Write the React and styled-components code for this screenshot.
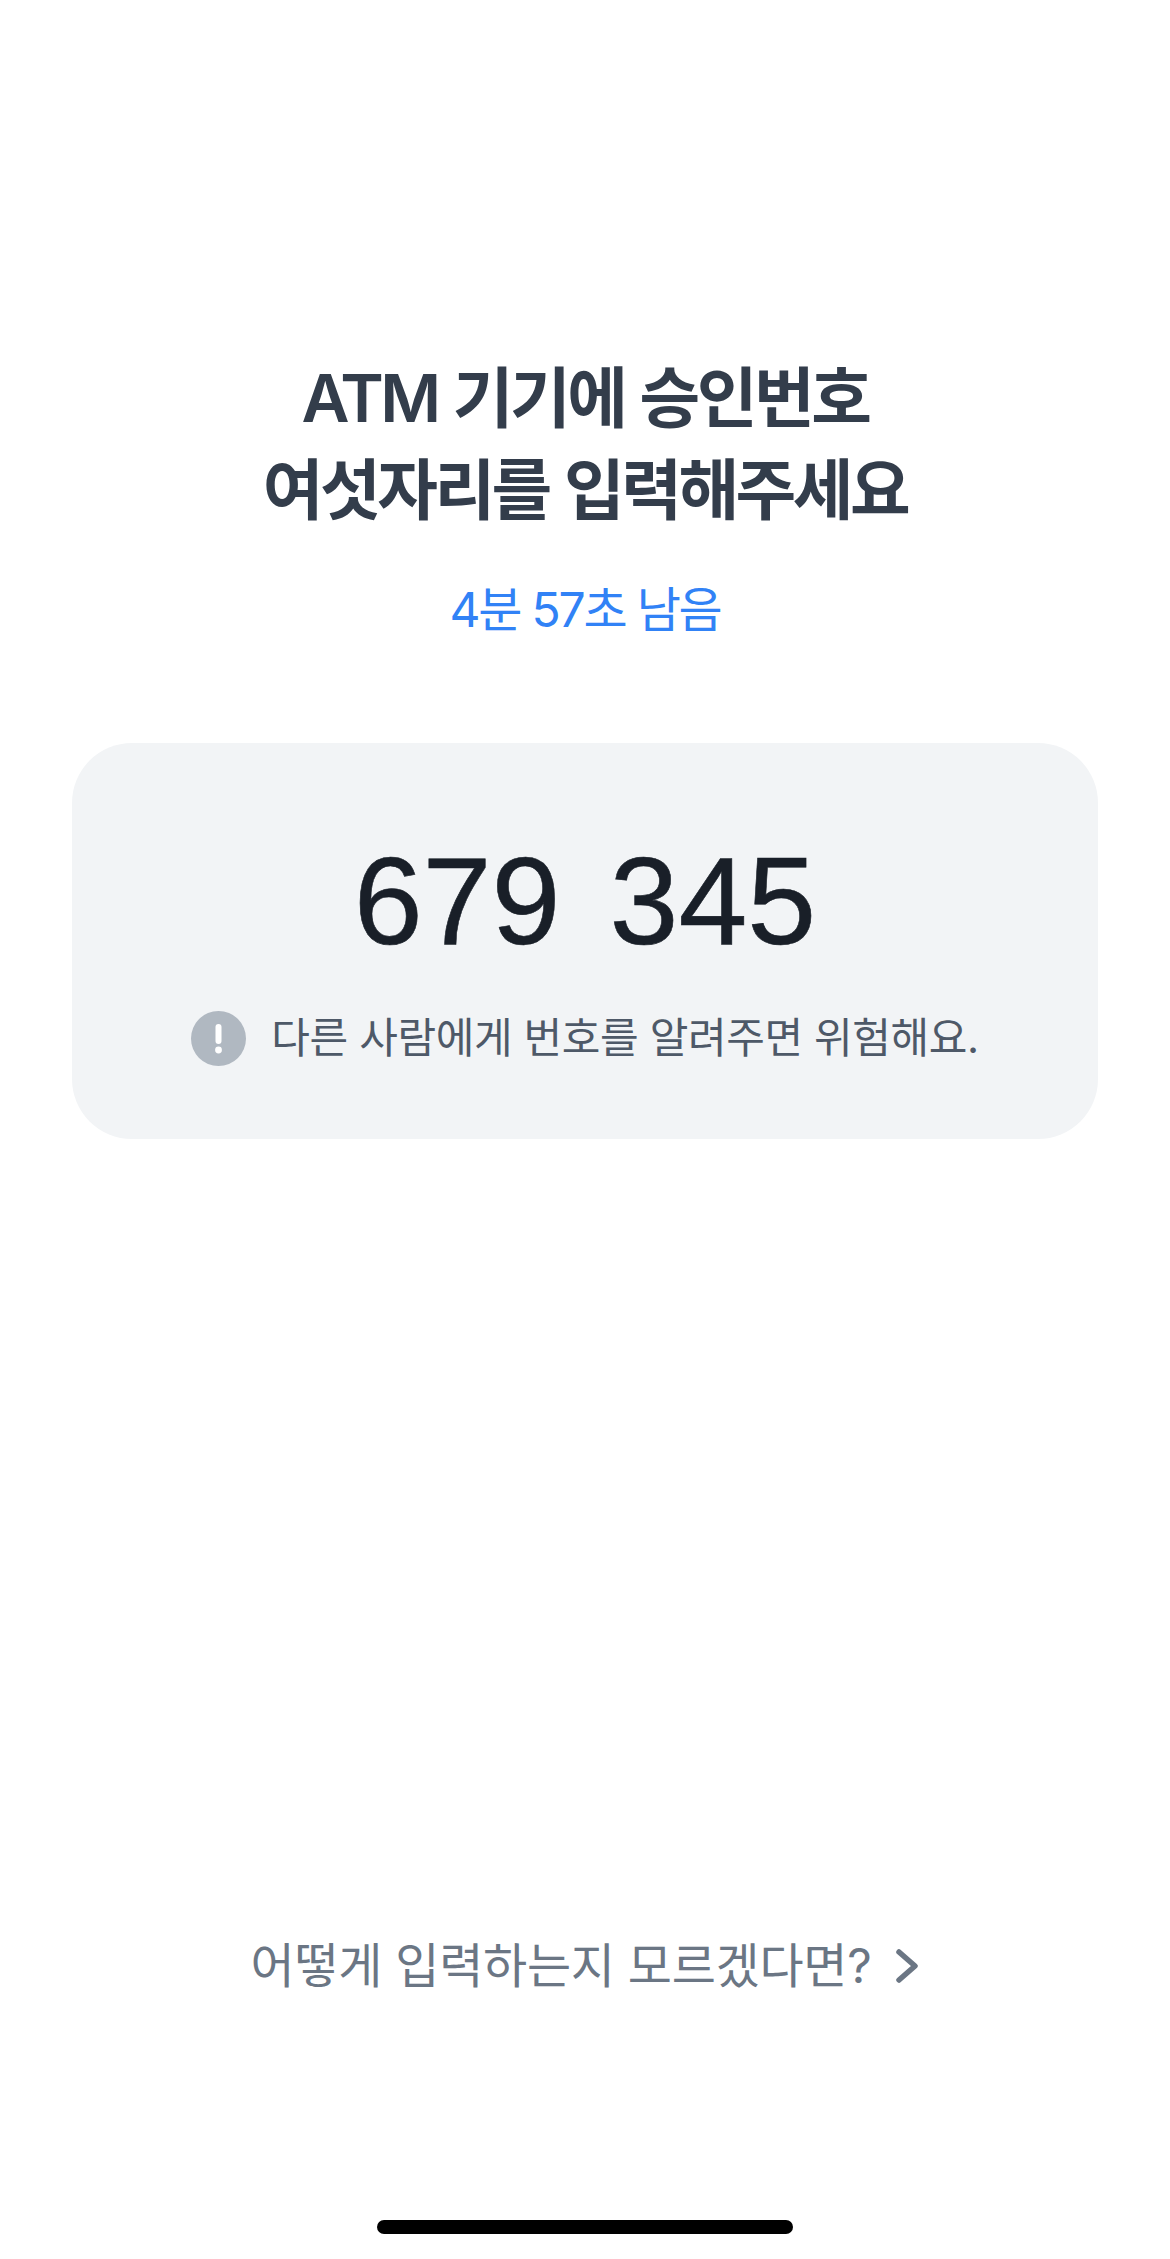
import React from 'react';
import styled, { createGlobalStyle } from 'styled-components';

const GlobalStyle = createGlobalStyle`
  html, body {
    margin: 0;
    padding: 0;
    background: #fff;
  }
  body {
    font-family: "Inter", "Noto Sans CJK KR", sans-serif;
  }
`;

export default function App() {
  return (
    <>
      <GlobalStyle />
      <Page>
        <Header>
          <Title>ATM 기기에 승인번호<br />여섯자리를 입력해주세요</Title>
          <Timer>4분 57초 남음</Timer>
        </Header>
        <CodeCard>
          <Code>679&nbsp;&nbsp;345</Code>
          <Warning>
            <WarningIcon viewBox="0 0 55 55">
              <circle cx="27.5" cy="27.5" r="27.5" fill="#b0b8c1" />
              <rect x="24.5" y="13" width="6" height="20" rx="3" fill="#fff" />
              <circle cx="27.5" cy="39" r="3.4" fill="#fff" />
            </WarningIcon>
            <WarningText>다른 사람에게 번호를 알려주면 위험해요.</WarningText>
          </Warning>
        </CodeCard>
        <Spacer />
        <HelpLink>
          어떻게 입력하는지 모르겠다면?
          <Chevron viewBox="0 0 24 36">
            <path d="M4 4 L20 18 L4 32" fill="none" stroke="#6b7684" strokeWidth="5.5" strokeLinecap="round" strokeLinejoin="round" />
          </Chevron>
        </HelpLink>
        <HomeIndicator />
      </Page>
    </>
  );
}

const Page = styled.div`
  width: 1170px;
  height: 2259px;
  display: flex;
  flex-direction: column;
  align-items: center;
  padding: 352px 72px 25px;
  box-sizing: border-box;
  overflow: hidden;
`;

const Header = styled.div`
  display: flex;
  flex-direction: column;
  align-items: center;
`;

const Title = styled.h1`
  margin: 0;
  font-size: 66px;
  line-height: 92px;
  font-weight: 600;
  letter-spacing: -3.5px;
  word-spacing: 2px;
  text-align: center;
  color: #333d4b;
`;

const Timer = styled.div`
  margin-top: 42px;
  font-size: 48px;
  line-height: 64px;
  font-weight: 400;
  letter-spacing: -2.2px;
  color: #3182f6;
`;

const CodeCard = styled.div`
  margin-top: 101px;
  width: 100%;
  height: 396px;
  box-sizing: border-box;
  padding-top: 98px;
  border-radius: 60px;
  background: #f2f4f6;
  display: flex;
  flex-direction: column;
  align-items: center;
`;

const Code = styled.div`
  font-family: "Liberation Sans", Arial, sans-serif;
  font-size: 124px;
  line-height: 120px;
  word-spacing: -10px;
  -webkit-text-stroke: 0.6px #191f28;
  color: #191f28;
`;

const Warning = styled.div`
  margin-top: 49px;
  display: flex;
  align-items: center;
  gap: 25px;
`;

const WarningIcon = styled.svg`
  width: 55px;
  height: 55px;
  flex: none;
`;

const WarningText = styled.div`
  font-size: 42px;
  line-height: 56px;
  letter-spacing: -0.4px;
  color: #4e5968;
`;

const Spacer = styled.div`
  flex: 1;
`;

const HelpLink = styled.div`
  display: flex;
  align-items: center;
  gap: 24px;
  font-size: 48px;
  line-height: 64px;
  letter-spacing: -0.3px;
  color: #6b7684;
`;

const Chevron = styled.svg`
  width: 24px;
  height: 36px;
  flex: none;
`;

const HomeIndicator = styled.div`
  margin-top: 222px;
  width: 416px;
  height: 14px;
  border-radius: 7px;
  background: #000;
`;
